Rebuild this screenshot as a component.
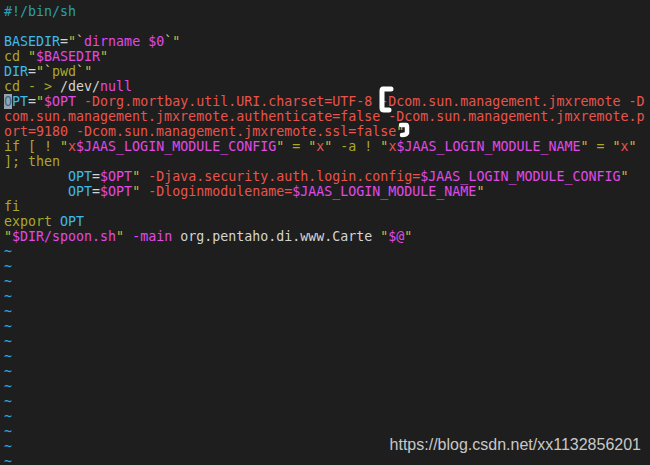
import React from 'react';

type Seg = [string, string];

const C = {
  com: 'text-[#2b9fb0]',
  id: 'text-[#40b8e8]',
  q: 'text-[#c4bc34]',
  pk: 'text-[#e04ae8]',
  kw: 'text-[#aaa82a]',
  red: 'text-[#e8544c]',
  pl: 'text-[#d4d4d4]',
  bt: 'text-[#d8d8c0]',
};

const lines: Seg[][] = [
  [['#!/bin/sh', C.com]],
  [],
  [['BASEDIR', C.id], ['=', C.pl], ['"', C.q], ['`', C.bt], ['dirname $0', C.pk], ['`', C.bt], ['"', C.q]],
  [['cd ', C.kw], ['"', C.q], ['$BASEDIR', C.pk], ['"', C.q]],
  [['DIR', C.id], ['=', C.pl], ['"', C.q], ['`', C.bt], ['pwd', C.kw], ['`', C.bt], ['"', C.q]],
  [['cd - > ', C.kw], ['/dev/', C.pl], ['null', C.pk]],
  [['PT', C.id], ['=', C.pl], ['"', C.q], ['$OPT', C.pk], [' -Dorg.mortbay.util.URI.charset=UTF-8 -Dcom.sun.management.jmxremote -D', C.red]],
  [['com.sun.management.jmxremote.authenticate=false -Dcom.sun.management.jmxremote.p', C.red]],
  [['ort=9180 -Dcom.sun.management.jmxremote.ssl=false', C.red], ['"', C.q]],
  [
    ['if [ ! ', C.kw], ['"', C.q], ['x', C.red], ['$JAAS_LOGIN_MODULE_CONFIG', C.pk], ['"', C.q], [' = ', C.kw],
    ['"', C.q], ['x', C.red], ['"', C.q], [' -a ! ', C.kw], ['"', C.q], ['x', C.red], ['$JAAS_LOGIN_MODULE_NAME', C.pk],
    ['"', C.q], [' = ', C.kw], ['"', C.q], ['x', C.red], ['"', C.q],
  ],
  [['];', C.kw], [' then', C.kw]],
  [['        ', C.pl], ['OPT', C.id], ['=', C.pl], ['$OPT', C.pk], ['"', C.q], [' -Djava.security.auth.login.config=', C.red], ['$JAAS_LOGIN_MODULE_CONFIG', C.pk], ['"', C.q]],
  [['        ', C.pl], ['OPT', C.id], ['=', C.pl], ['$OPT', C.pk], ['"', C.q], [' -Dloginmodulename=', C.red], ['$JAAS_LOGIN_MODULE_NAME', C.pk], ['"', C.q]],
  [['fi', C.kw]],
  [['export', C.kw], [' OPT', C.id]],
  [['"', C.q], ['$DIR/spoon.sh', C.pk], ['"', C.q], [' ', C.pl], ['-main', C.pk], [' org.pentaho.di.www.Carte ', C.pl], ['"', C.q], ['$@', C.pk], ['"', C.q]],
];

const App: React.FC = () => {
  return (
    <div className="relative w-[650px] h-[465px] overflow-hidden bg-[#1e1e1e] pt-[4px] pl-[4px] font-['DejaVu_Sans_Mono',monospace] text-[13.3px] leading-[15px]">
      {lines.map((segs, i) => (
        <div key={i} className="h-[15px] whitespace-pre">
          {i === 6 && <span className="bg-[#9aa4ae] text-[#3a6a8a]">O</span>}
          {segs.map(([t, c], j) => (
            <span key={j} className={c}>{t}</span>
          ))}
        </div>
      ))}
      {Array.from({ length: 15 }).map((_, i) => (
        <div key={'t' + i} className="h-[15px] text-[#2aa8e0]">~</div>
      ))}

      {/* hand-drawn marks */}
      <svg className="absolute left-0 top-0" width="650" height="465" fill="none">
        <path d="M391 89 L383 89 Q382 89 382 91 L382 108 Q382 110 384 110 L389 110" stroke="#ffffff" strokeWidth="5" strokeLinecap="round" strokeLinejoin="round" />
        <path d="M401 125 L406 125 Q407 125 407 127 L407 133 Q406 135 402 135" stroke="#ffffff" strokeWidth="4.5" strokeLinecap="round" strokeLinejoin="round" />
      </svg>

      <div className="absolute right-[9px] top-[435px] font-['Liberation_Sans',Arial,sans-serif] text-[16px] leading-[20px] text-[#c8c8c8]">
        https://blog.csdn.net/xx1132856201
      </div>
    </div>
  );
};

export default App;
